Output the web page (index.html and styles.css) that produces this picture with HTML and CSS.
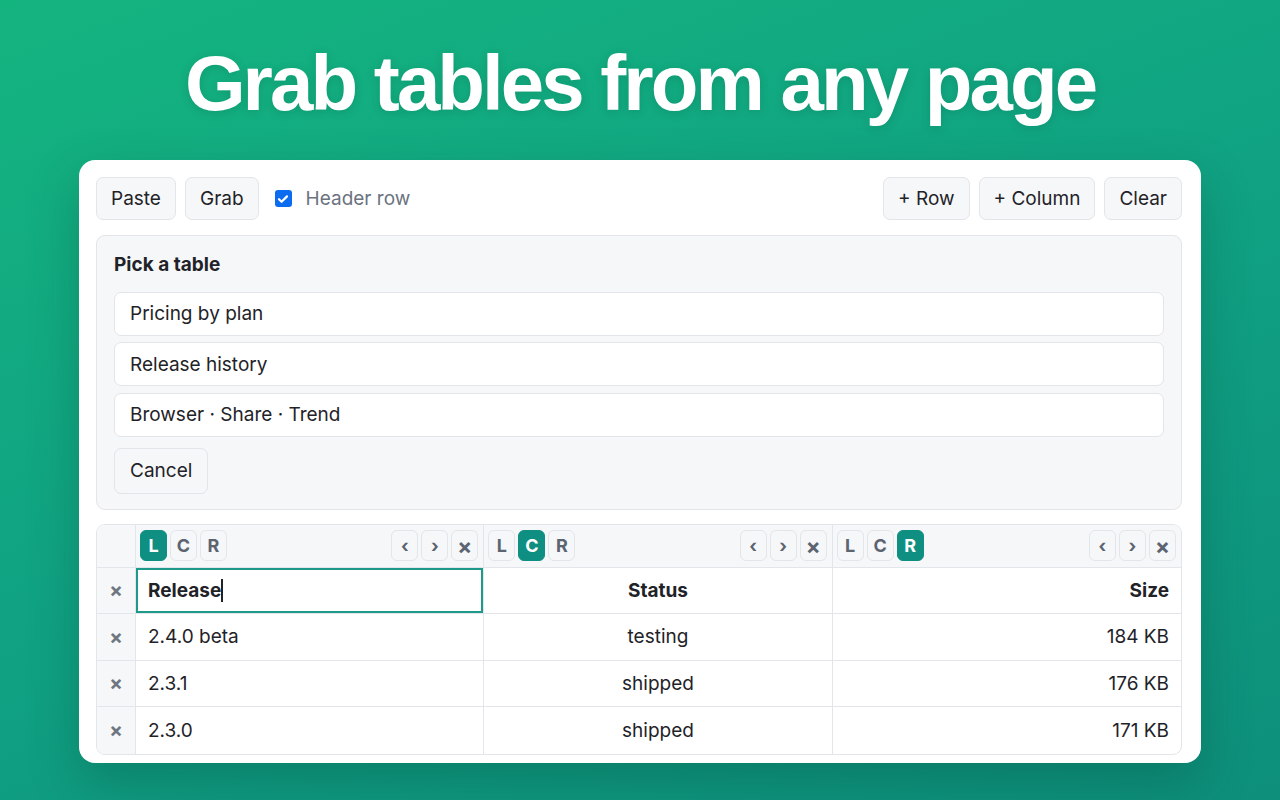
FILE: index.html
```html
<!DOCTYPE html>
<html>
<head>
<meta charset="utf-8">
<link rel="stylesheet" href="styles.css">
</head>
<body>
<h1 class="title">Grab tables from any page</h1>
<div class="card">
  <div class="toolbar">
    <div class="group">
      <button class="btn">Paste</button>
      <button class="btn">Grab</button>
      <label class="check"><span class="box"><svg viewBox="0 0 16 16" width="16" height="16"><path d="M4 8.2l2.6 2.6L12 5.4" fill="none" stroke="#fff" stroke-width="2.2" stroke-linecap="round" stroke-linejoin="round"/></svg></span>Header row</label>
    </div>
    <div class="group">
      <button class="btn">+ Row</button>
      <button class="btn">+ Column</button>
      <button class="btn">Clear</button>
    </div>
  </div>

  <div class="picker">
    <div class="picker-title">Pick a table</div>
    <div class="option">Pricing by plan</div>
    <div class="option">Release history</div>
    <div class="option">Browser · Share · Trend</div>
    <button class="btn cancel">Cancel</button>
  </div>

  <div class="table">
    <div class="ctl corner"></div>
    <div class="ctl">
      <div class="seg"><span class="mini on">L</span><span class="mini">C</span><span class="mini">R</span></div>
      <div class="seg"><span class="mini">‹</span><span class="mini">›</span><span class="mini x">×</span></div>
    </div>
    <div class="ctl">
      <div class="seg"><span class="mini">L</span><span class="mini on">C</span><span class="mini">R</span></div>
      <div class="seg"><span class="mini">‹</span><span class="mini">›</span><span class="mini x">×</span></div>
    </div>
    <div class="ctl last">
      <div class="seg"><span class="mini">L</span><span class="mini">C</span><span class="mini on">R</span></div>
      <div class="seg"><span class="mini">‹</span><span class="mini">›</span><span class="mini x">×</span></div>
    </div>

    <div class="del">×</div>
    <div class="cell head left editing">Release<span class="caret"></span></div>
    <div class="cell head center">Status</div>
    <div class="cell head right last">Size</div>

    <div class="del">×</div>
    <div class="cell left">2.4.0 beta</div>
    <div class="cell center">testing</div>
    <div class="cell right last">184 KB</div>

    <div class="del">×</div>
    <div class="cell left">2.3.1</div>
    <div class="cell center">shipped</div>
    <div class="cell right last">176 KB</div>

    <div class="del bottom">×</div>
    <div class="cell left bottom">2.3.0</div>
    <div class="cell center bottom">shipped</div>
    <div class="cell right last bottom">171 KB</div>
  </div>
</div>
</body>
</html>
```

FILE: styles.css
```css
* { box-sizing: border-box; }
html, body { margin: 0; height: 100%; }
body {
  width: 1280px;
  height: 800px;
  overflow: hidden;
  background: linear-gradient(160deg, #14b47f 0%, #10a283 50%, #0d8f7b 100%);
  font-family: Inter, "Noto Sans", sans-serif;
  color: #1f2328;
  display: flex;
  flex-direction: column;
  align-items: center;
}
.title {
  margin: 44px 0 38px;
  font-family: "Liberation Sans", Arial, sans-serif;
  font-weight: 700;
  font-size: 78px;
  line-height: 78px;
  letter-spacing: -2.95px;
  color: #fff;
  text-shadow: 0 2px 10px rgba(0, 60, 40, 0.18);
}
.card {
  width: 1122px;
  background: #fff;
  border-radius: 16px;
  padding: 17px 19px 8px 17px;
  box-shadow: 0 20px 50px rgba(0, 50, 40, 0.25);
}
.toolbar {
  display: flex;
  justify-content: space-between;
  align-items: center;
}
.group { display: flex; align-items: center; gap: 9px; }
.btn {
  font-family: inherit;
  font-size: 19px;
  color: #1f2328;
  background: #f6f7f9;
  border: 1px solid #e2e5e9;
  border-radius: 7px;
  height: 43px;
  padding: 0 14px;
  line-height: 1;
}
.check {
  display: flex;
  align-items: center;
  gap: 14px;
  margin-left: 7px;
  font-size: 19px;
  color: #6b7280;
}
.box {
  width: 17px;
  height: 17px;
  border-radius: 3px;
  background: #0b6cf0;
  display: flex;
  align-items: center;
  justify-content: center;
}
.picker {
  margin-top: 15px;
  background: #f6f7f9;
  border: 1px solid #e2e5e9;
  border-radius: 9px;
  padding: 18px 17px 15px;
  display: flex;
  flex-direction: column;
  gap: 6.5px;
}
.picker-title {
  font-weight: 700;
  font-size: 19px;
  line-height: 22px;
  margin-bottom: 9px;
}
.option {
  background: #fff;
  border: 1px solid #e2e5e9;
  border-radius: 7px;
  height: 44px;
  display: flex;
  align-items: center;
  padding: 0 15px;
  font-size: 19px;
}
.cancel {
  align-self: flex-start;
  margin-top: 4.5px;
  height: 46px;
  padding: 0 15px;
}
.table {
  margin-top: 14px;
  border: 1px solid #e2e5e9;
  border-radius: 9px;
  overflow: hidden;
  display: grid;
  grid-template-columns: 39px 1fr 1fr 1fr;
}
.ctl {
  background: #f6f7f9;
  height: 43px;
  border-bottom: 1px solid #e2e5e9;
  border-right: 1px solid #e2e5e9;
  display: flex;
  justify-content: space-between;
  align-items: center;
  padding: 0 5px 0 4px;
}
.ctl.last { border-right: none; }
.seg { display: flex; gap: 3px; }
.mini {
  width: 27px;
  height: 31px;
  border: 1px solid #e2e5e9;
  border-radius: 6px;
  background: #f6f7f9;
  display: flex;
  align-items: center;
  justify-content: center;
  font-size: 18px;
  font-weight: 700;
  color: #5b6470;
}
.mini.on {
  background: #0f8f81;
  border-color: #0f8f81;
  color: #fff;
}
.mini.x { font-size: 22px; }
.del {
  background: #f6f7f9;
  border-bottom: 1px solid #e2e5e9;
  border-right: 1px solid #e2e5e9;
  display: flex;
  align-items: center;
  justify-content: center;
  font-size: 20px;
  font-weight: 700;
  color: #6e7781;
  height: 46.5px;
}
.cell {
  height: 46.5px;
  border-bottom: 1px solid #e2e5e9;
  border-right: 1px solid #e2e5e9;
  display: flex;
  align-items: center;
  padding: 0 12px;
  font-size: 19px;
  color: #1f2328;
}
.cell.last { border-right: none; }
.bottom { border-bottom: none; }
.cell.head { font-weight: 700; }
.left { justify-content: flex-start; }
.center { justify-content: center; }
.right { justify-content: flex-end; }
.editing {
  box-shadow: inset 0 0 0 2px #1f9a8a;
  padding-left: 12px;
}
.caret {
  display: inline-block;
  width: 1.5px;
  height: 23px;
  background: #1f2328;
  margin-left: 0;
}
```
